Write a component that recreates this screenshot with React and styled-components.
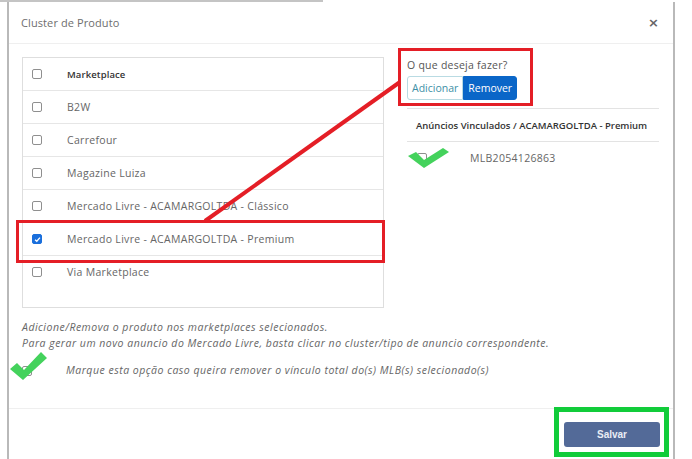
import React from "react";
import styled, { createGlobalStyle } from "styled-components";

const GlobalStyle = createGlobalStyle`
    html, body {
        margin: 0;
        padding: 0;
        background: #fff;
    }
    body {
        font-family: "Open Sans", "Liberation Sans", sans-serif;
        width: 692px;
        height: 459px;
        overflow: hidden;
    }
`;

const Page = styled.div`
    position: relative;
    width: 692px;
    height: 459px;
    overflow: hidden;
`;

const TopStrip = styled.div`
    width: 323px;
    height: 2px;
    background: #c4c4c4;
`;

const Modal = styled.div`
    margin-left: 7px;
    width: 664px;
    height: 457px;
    border-left: 2px solid #b9b9b9;
    border-right: 2px solid #b9b9b9;
    display: flex;
    flex-direction: column;
`;

const Header = styled.div`
    height: 41px;
    display: flex;
    align-items: center;
    justify-content: space-between;
    padding: 0 14px 0 12px;
    border-bottom: 1px solid #efefef;
`;

const Title = styled.div`
    font-size: 11px;
    color: #6e6e6e;
    letter-spacing: 0.1px;
`;

const Close = styled.div`
    font-size: 13px;
    font-weight: 700;
    color: #666;
    font-family: "DejaVu Sans", sans-serif;
`;

const Body = styled.div`
    flex: 1;
    padding: 13px 12px 0 13px;
    border-bottom: 1px solid #efefef;
`;

const Columns = styled.div`
    display: grid;
    grid-template-columns: 362px 252px;
    column-gap: 23px;
`;

const Table = styled.div`
    border: 1px solid #dedede;
    height: 249px;
`;

const Row = styled.div`
    height: 32px;
    display: flex;
    align-items: center;
    border-bottom: 1px solid #e6e6e6;
    font-size: ${(p) => (p.$head ? "9.5px" : "10.5px")};
    font-weight: ${(p) => (p.$head ? 600 : 400)};
    letter-spacing: ${(p) => (p.$head ? "0.1px" : "0.3px")};
    color: ${(p) => (p.$head ? "#333" : "#666")};
    &:last-child {
        border-bottom: none;
    }
`;

const CheckCell = styled.div`
    width: 44px;
    padding-left: 9px;
    box-sizing: border-box;
    display: flex;
`;

const Box = styled.span`
    width: 8px;
    height: 8px;
    border: 1px solid ${(p) => (p.$checked ? "#1a6fdc" : "#8f8f8f")};
    border-radius: 2px;
    background: ${(p) => (p.$checked ? "#1a6fdc" : "#fff")};
    display: inline-flex;
    align-items: center;
    justify-content: center;
    flex-shrink: 0;
`;

const Right = styled.div`
    padding-top: 1px;
`;

const Question = styled.div`
    font-size: 10.5px;
    color: #555;
    letter-spacing: 0.25px;
    margin-bottom: 3px;
`;

const Toggle = styled.div`
    display: inline-flex;
    height: 24px;
`;

const ToggleBtn = styled.div`
    display: flex;
    align-items: center;
    padding: 0 ${(p) => (p.$active ? "4px" : "4px")};
    font-size: 10.5px;
    color: ${(p) => (p.$active ? "#fff" : "#3d8fa6")};
    background: ${(p) => (p.$active ? "#0a66c8" : "#fff")};
    border: 1px solid ${(p) => (p.$active ? "#0a66c8" : "#b9dbe3")};
    border-radius: ${(p) => (p.$active ? "0 3px 3px 0" : "3px 0 0 3px")};
`;

const Linked = styled.div`
    margin-top: 8px;
    border-top: 1px solid #e3e3e3;
`;

const LinkedHead = styled.div`
    height: 32px;
    display: flex;
    align-items: center;
    padding-left: 9px;
    font-size: 9.5px;
    font-weight: 600;
    color: #333;
    border-bottom: 1px solid #e3e3e3;
`;

const LinkedRow = styled.div`
    height: 32px;
    display: flex;
    align-items: center;
    padding-left: 10px;
    font-size: 10.5px;
    letter-spacing: 0.3px;
    color: #666;
    & > span:last-child {
        margin-left: 43px;
    }
`;

const Notes = styled.div`
    margin-top: 12px;
    font-size: 10.5px;
    letter-spacing: 0.5px;
    font-style: italic;
    color: #666;
    line-height: 15.5px;
`;

const OptionLine = styled.div`
    display: flex;
    align-items: center;
    margin-top: 12px;
    & > span:last-child {
        margin-top: 0;
        margin-left: 34px;
    }
`;

const Footer = styled.div`
    height: 50px;
    display: flex;
    justify-content: flex-end;
    align-items: center;
    padding-right: 13px;
`;

const SaveButton = styled.div`
    width: 96px;
    height: 25px;
    border-radius: 3px;
    background: #536a98;
    color: #e9edf5;
    font-family: "Liberation Sans", sans-serif;
    font-weight: 700;
    font-size: 10px;
    display: flex;
    align-items: center;
    justify-content: center;
    margin-top: 1px;
`;

const Mark = styled.div`
    position: absolute;
    left: ${(p) => p.$x}px;
    top: ${(p) => p.$y}px;
    width: ${(p) => p.$w}px;
    height: ${(p) => p.$h}px;
    border: ${(p) => p.$t}px solid ${(p) => p.$color};
    box-sizing: border-box;
    pointer-events: none;
`;

const Overlay = styled.svg`
    position: absolute;
    left: 0;
    top: 0;
    pointer-events: none;
`;

const marketplaces = [
    "B2W",
    "Carrefour",
    "Magazine Luiza",
    "Mercado Livre - ACAMARGOLTDA - Clássico",
    "Mercado Livre - ACAMARGOLTDA - Premium",
    "Via Marketplace",
];

const CheckBox = ({ checked }) => (
    <Box $checked={checked}>
        {checked && (
            <svg width="7" height="7" viewBox="0 0 8 8">
                <path d="M1.2 4.2 L3.2 6 L6.8 1.8" fill="none" stroke="#fff" strokeWidth="1.5" />
            </svg>
        )}
    </Box>
);

const App = () => {
    return (
        <Page>
            <GlobalStyle />
            <TopStrip />
            <Modal>
                <Header>
                    <Title>Cluster de Produto</Title>
                    <Close>×</Close>
                </Header>
                <Body>
                    <Columns>
                        <Table>
                            <Row $head>
                                <CheckCell>
                                    <CheckBox />
                                </CheckCell>
                                Marketplace
                            </Row>
                            {marketplaces.map((m) => (
                                <Row key={m}>
                                    <CheckCell>
                                        <CheckBox checked={m.endsWith("Premium")} />
                                    </CheckCell>
                                    {m}
                                </Row>
                            ))}
                        </Table>
                        <Right>
                            <Question>O que deseja fazer?</Question>
                            <Toggle>
                                <ToggleBtn>Adicionar</ToggleBtn>
                                <ToggleBtn $active>Remover</ToggleBtn>
                            </Toggle>
                            <Linked>
                                <LinkedHead>Anúncios Vinculados / ACAMARGOLTDA - Premium</LinkedHead>
                                <LinkedRow>
                                    <CheckBox />
                                    <span>MLB2054126863</span>
                                </LinkedRow>
                            </Linked>
                        </Right>
                    </Columns>
                    <Notes>
                        Adicione/Remova o produto nos marketplaces selecionados.
                        <br />
                        Para gerar um novo anuncio do Mercado Livre, basta clicar no cluster/tipo de anuncio correspondente.
                    </Notes>
                    <OptionLine>
                        <CheckBox />
                        <Notes as="span">
                            Marque esta opção caso queira remover o vínculo total do(s) MLB(s) selecionado(s)
                        </Notes>
                    </OptionLine>
                </Body>
                <Footer>
                    <SaveButton>Salvar</SaveButton>
                </Footer>
            </Modal>

            <Mark $x={16} $y={220} $w={369} $h={43} $t={3} $color="#e41e26" />
            <Mark $x={398} $y={48} $w={135} $h={58} $t={3} $color="#e41e26" />
            <Mark $x={554} $y={407} $w={115} $h={50} $t={5} $color="#11cc3a" />
            <Overlay width="692" height="459">
                <line x1="205" y1="221" x2="400" y2="82" stroke="#e41e26" strokeWidth="4" />
                <polygon points="408,156 416,152 424,160 443,148 449,152 424,168" fill="#44d25c" />
                <polygon points="10,369 17,363 24,370 41,352 47,358 23,380" fill="#44d25c" />
            </Overlay>
        </Page>
    );
};

export default App;
